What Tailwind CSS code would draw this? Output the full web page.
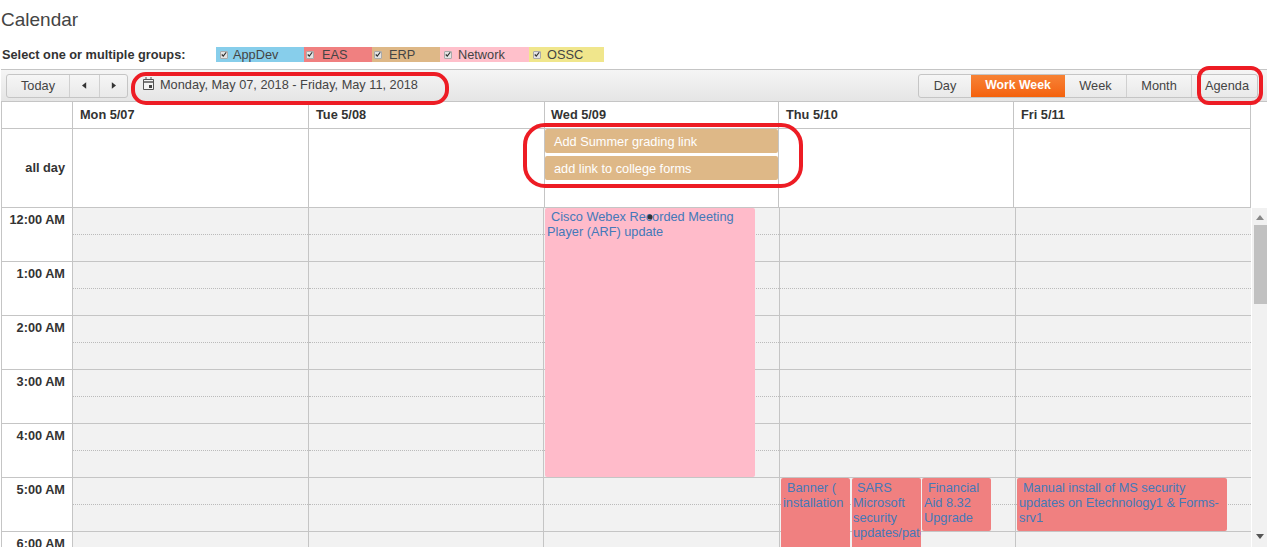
<!DOCTYPE html>
<html>
<head>
<meta charset="utf-8">
<script src="https://cdn.jsdelivr.net/npm/@tailwindcss/browser@4"></script>
</head>
<body class="bg-white">
<div class="relative w-[1267px] h-[547px] overflow-hidden font-['Liberation_Sans',Arial,sans-serif] text-[#333] text-[12.75px]">
  <h1 class="h-[47px] pt-[9px] pl-px text-[19px] leading-[22px] text-[#444]">Calendar</h1>
  <div class="flex h-[15px] items-center pl-[2px]">
    <span class="w-[214px] font-bold text-[#333]">Select one or multiple groups:</span>
    <div class="flex h-[15px] leading-[15px] text-[#444]">
      <label class="flex w-[88px] bg-[#87ceeb] items-center pl-[4px] gap-[5px]"><span class="flex w-[8px] h-[8px] items-center justify-center rounded-[1px] bg-[#e4e4e4] border border-[#aaa]"><svg viewBox="0 0 8 8" class="w-[7px] h-[7px]"><path d="M1 4l2 2 4-5" fill="none" stroke="#333" stroke-width="1.6"/></svg></span>AppDev</label>
      <label class="flex w-[68px] bg-[#f08080] items-center pl-[2px] gap-[8px]"><span class="flex w-[8px] h-[8px] items-center justify-center rounded-[1px] bg-[#e4e4e4] border border-[#aaa]"><svg viewBox="0 0 8 8" class="w-[7px] h-[7px]"><path d="M1 4l2 2 4-5" fill="none" stroke="#333" stroke-width="1.6"/></svg></span>EAS</label>
      <label class="flex w-[68px] bg-[#deb887] items-center pl-[2px] gap-[7px]"><span class="flex w-[8px] h-[8px] items-center justify-center rounded-[1px] bg-[#e4e4e4] border border-[#aaa]"><svg viewBox="0 0 8 8" class="w-[7px] h-[7px]"><path d="M1 4l2 2 4-5" fill="none" stroke="#333" stroke-width="1.6"/></svg></span>ERP</label>
      <label class="flex w-[89px] bg-[#ffc0cb] items-center pl-[4px] gap-[6px]"><span class="flex w-[8px] h-[8px] items-center justify-center rounded-[1px] bg-[#e4e4e4] border border-[#aaa]"><svg viewBox="0 0 8 8" class="w-[7px] h-[7px]"><path d="M1 4l2 2 4-5" fill="none" stroke="#333" stroke-width="1.6"/></svg></span>Network</label>
      <label class="flex w-[75px] bg-[#f0e68c] items-center pl-[4px] gap-[6px]"><span class="flex w-[8px] h-[8px] items-center justify-center rounded-[1px] bg-[#e4e4e4] border border-[#aaa]"><svg viewBox="0 0 8 8" class="w-[7px] h-[7px]"><path d="M1 4l2 2 4-5" fill="none" stroke="#333" stroke-width="1.6"/></svg></span>OSSC</label>
    </div>
  </div>
  <div class="mt-[7px] h-[33px] flex items-center justify-between pl-[5px] pr-[9px] bg-gradient-to-b from-[#f5f5f5] to-[#e5e5e5] border-y border-[#c5c5c5] ml-px text-[#444]">
    <div class="flex items-center">
      <div class="flex h-[24px] w-[122px] rounded-[3px] border border-[#c5c5c5] bg-gradient-to-b from-[#f6f6f6] to-[#e9e9e9]">
        <span class="flex w-[63px] items-center justify-center border-r border-[#d0d0d0]">Today</span>
        <span class="flex w-[30px] items-center justify-center border-r border-[#d0d0d0]"><svg viewBox="0 0 6 8" class="w-[5px] h-[7px]"><path d="M5 0v8L0 4z" fill="#333"/></svg></span>
        <span class="flex flex-1 items-center justify-center"><svg viewBox="0 0 6 8" class="w-[5px] h-[7px]"><path d="M1 0v8l5-4z" fill="#333"/></svg></span>
      </div>
      <div class="flex items-center ml-[15px] -mt-[1px]">
        <svg viewBox="0 0 11 13" class="w-[11px] h-[13px] -mt-[3px]"><path d="M.5 2.5h10v10H.5z" fill="#f4f4f4" stroke="#555"/><path d="M0 5h11" stroke="#555" stroke-width="1.5"/><path d="M3 0v3M8 0v3" stroke="#555"/><path d="M6 8h3v3H6z" fill="#444"/></svg>
        <span class="ml-[6px]">Monday, May 07, 2018 - Friday, May 11, 2018</span>
      </div>
    </div>
    <div class="flex h-[24px] w-[340px] rounded-[3px] border border-[#c5c5c5] bg-gradient-to-b from-[#f6f6f6] to-[#e9e9e9]">
      <span class="flex w-[52px] items-center justify-center">Day</span>
      <span class="flex w-[94px] items-center justify-center font-bold text-[12.25px] text-white bg-gradient-to-b from-[#f78234] to-[#f4610a]">Work Week</span>
      <span class="flex w-[62px] items-center justify-center border-r border-[#d0d0d0]">Week</span>
      <span class="flex w-[65px] items-center justify-center border-r border-[#d0d0d0]">Month</span>
      <span class="flex flex-1 items-center justify-center pl-[5px]">Agenda</span>
    </div>
  </div>
  <div class="flex h-[27px] ml-px border-b border-[#c5c5c5] w-[1250px] font-bold text-[#333] leading-[26px]">
    <div class="w-[71px] border-l border-[#c5c5c5]"></div>
    <div class="w-[236px] border-l border-[#c5c5c5] pl-[7px]">Mon 5/07</div>
    <div class="w-[236px] border-l border-[#c5c5c5] pl-[7px]">Tue 5/08</div>
    <div class="w-[234px] border-l border-[#c5c5c5] pl-[6px]">Wed 5/09</div>
    <div class="w-[235px] border-l border-[#c5c5c5] pl-[7px]">Thu 5/10</div>
    <div class="w-[238px] border-x border-[#c5c5c5] pl-[7px]">Fri 5/11</div>
  </div>
  <div class="flex h-[79px] ml-px border-b border-[#c5c5c5] w-[1250px]">
    <div class="flex w-[71px] items-center justify-end pr-[7px] border-l border-[#c5c5c5] font-bold text-[#333]">all day</div>
    <div class="w-[236px] border-l border-[#c5c5c5]"></div>
    <div class="w-[236px] border-l border-[#c5c5c5]"></div>
    <div class="flex flex-col w-[234px] border-l border-[#c5c5c5] text-white">
      <div class="h-[24px] rounded-[2px] bg-[#deb887] pl-[9px] leading-[26px]">Add Summer grading link</div>
      <div class="mt-[3px] h-[24px] rounded-[2px] bg-[#deb887] pl-[9px] leading-[26px]">add link to college forms</div>
    </div>
    <div class="w-[235px] border-l border-[#c5c5c5]"></div>
    <div class="w-[238px] border-x border-[#c5c5c5]"></div>
  </div>
  <div class="flex h-[339px]">
    <div class="flex flex-col w-[71px] ml-px border-l border-[#c5c5c5] font-bold text-[12.75px] text-[#333] text-right shrink-0">
      <div class="h-[54px] shrink-0 pt-[2px] pr-[7px] border-b border-[#c5c5c5]">12:00 AM</div>
      <div class="h-[54px] shrink-0 pt-[2px] pr-[7px] border-b border-[#c5c5c5]">1:00 AM</div>
      <div class="h-[54px] shrink-0 pt-[2px] pr-[7px] border-b border-[#c5c5c5]">2:00 AM</div>
      <div class="h-[54px] shrink-0 pt-[2px] pr-[7px] border-b border-[#c5c5c5]">3:00 AM</div>
      <div class="h-[54px] shrink-0 pt-[2px] pr-[7px] border-b border-[#c5c5c5]">4:00 AM</div>
      <div class="h-[54px] shrink-0 pt-[2px] pr-[7px] border-b border-[#c5c5c5]">5:00 AM</div>
      <div class="h-[54px] shrink-0 pt-[2px] pr-[7px]">6:00 AM</div>
    </div>
    <div class="grid grid-cols-[236px_235px_236px_236px_236px] w-[1179px] text-[12.75px] leading-[15px] text-[#4479b9] overflow-hidden">
      <div class="relative border-l border-[#c5c5c5] bg-[#f2f2f2]">
        <div class="h-[54px] border-b border-[#c5c5c5]"><div class="h-[27px] border-b border-dotted border-[#bbb]"></div></div>
        <div class="h-[54px] border-b border-[#c5c5c5]"><div class="h-[27px] border-b border-dotted border-[#bbb]"></div></div>
        <div class="h-[54px] border-b border-[#c5c5c5]"><div class="h-[27px] border-b border-dotted border-[#bbb]"></div></div>
        <div class="h-[54px] border-b border-[#c5c5c5]"><div class="h-[27px] border-b border-dotted border-[#bbb]"></div></div>
        <div class="h-[54px] border-b border-[#c5c5c5]"><div class="h-[27px] border-b border-dotted border-[#bbb]"></div></div>
        <div class="h-[54px] border-b border-[#c5c5c5]"><div class="h-[27px] border-b border-dotted border-[#bbb]"></div></div>
        <div class="h-[27px] border-b border-dotted border-[#bbb]"></div>
      </div>
      <div class="relative border-l border-[#c5c5c5] bg-[#f2f2f2]">
        <div class="h-[54px] border-b border-[#c5c5c5]"><div class="h-[27px] border-b border-dotted border-[#bbb]"></div></div>
        <div class="h-[54px] border-b border-[#c5c5c5]"><div class="h-[27px] border-b border-dotted border-[#bbb]"></div></div>
        <div class="h-[54px] border-b border-[#c5c5c5]"><div class="h-[27px] border-b border-dotted border-[#bbb]"></div></div>
        <div class="h-[54px] border-b border-[#c5c5c5]"><div class="h-[27px] border-b border-dotted border-[#bbb]"></div></div>
        <div class="h-[54px] border-b border-[#c5c5c5]"><div class="h-[27px] border-b border-dotted border-[#bbb]"></div></div>
        <div class="h-[54px] border-b border-[#c5c5c5]"><div class="h-[27px] border-b border-dotted border-[#bbb]"></div></div>
        <div class="h-[27px] border-b border-dotted border-[#bbb]"></div>
      </div>
      <div class="relative border-l border-[#c5c5c5] bg-[#f2f2f2]">
        <div class="h-[54px] border-b border-[#c5c5c5]"><div class="h-[27px] border-b border-dotted border-[#bbb]"></div></div>
        <div class="h-[54px] border-b border-[#c5c5c5]"><div class="h-[27px] border-b border-dotted border-[#bbb]"></div></div>
        <div class="h-[54px] border-b border-[#c5c5c5]"><div class="h-[27px] border-b border-dotted border-[#bbb]"></div></div>
        <div class="h-[54px] border-b border-[#c5c5c5]"><div class="h-[27px] border-b border-dotted border-[#bbb]"></div></div>
        <div class="h-[54px] border-b border-[#c5c5c5]"><div class="h-[27px] border-b border-dotted border-[#bbb]"></div></div>
        <div class="h-[54px] border-b border-[#c5c5c5]"><div class="h-[27px] border-b border-dotted border-[#bbb]"></div></div>
        <div class="h-[27px] border-b border-dotted border-[#bbb]"></div>
        <div class="absolute left-[1px] top-0 w-[210px] h-[269px] bg-[#ffbbca] rounded-[2px] pl-[2px] pt-px indent-[4px] overflow-hidden">Cisco Webex Recorded Meeting Player (ARF) update</div>
      </div>
      <div class="relative border-l border-[#c5c5c5] bg-[#f2f2f2]">
        <div class="h-[54px] border-b border-[#c5c5c5]"><div class="h-[27px] border-b border-dotted border-[#bbb]"></div></div>
        <div class="h-[54px] border-b border-[#c5c5c5]"><div class="h-[27px] border-b border-dotted border-[#bbb]"></div></div>
        <div class="h-[54px] border-b border-[#c5c5c5]"><div class="h-[27px] border-b border-dotted border-[#bbb]"></div></div>
        <div class="h-[54px] border-b border-[#c5c5c5]"><div class="h-[27px] border-b border-dotted border-[#bbb]"></div></div>
        <div class="h-[54px] border-b border-[#c5c5c5]"><div class="h-[27px] border-b border-dotted border-[#bbb]"></div></div>
        <div class="h-[54px] border-b border-[#c5c5c5]"><div class="h-[27px] border-b border-dotted border-[#bbb]"></div></div>
        <div class="h-[27px] border-b border-dotted border-[#bbb]"></div>
        <div class="absolute left-[1px] top-[270px] w-[69px] h-[80px] bg-[#f08080] rounded-[2px] pl-[2px] pt-[2px] indent-[4px] overflow-hidden">Banner ( installation</div>
        <div class="absolute left-[72px] top-[270px] w-[69px] h-[80px] bg-[#f08080] rounded-[2px] pl-px pt-[2px] indent-[4px] overflow-hidden">SARS Microsoft security updates/patches</div>
        <div class="absolute left-[142px] top-[270px] w-[69px] h-[53px] bg-[#f08080] rounded-[2px] pl-[2px] pt-[2px] indent-[4px] overflow-hidden">Financial Aid 8.32 Upgrade</div>
      </div>
      <div class="relative border-l border-[#c5c5c5] bg-[#f2f2f2]">
        <div class="h-[54px] border-b border-[#c5c5c5]"><div class="h-[27px] border-b border-dotted border-[#bbb]"></div></div>
        <div class="h-[54px] border-b border-[#c5c5c5]"><div class="h-[27px] border-b border-dotted border-[#bbb]"></div></div>
        <div class="h-[54px] border-b border-[#c5c5c5]"><div class="h-[27px] border-b border-dotted border-[#bbb]"></div></div>
        <div class="h-[54px] border-b border-[#c5c5c5]"><div class="h-[27px] border-b border-dotted border-[#bbb]"></div></div>
        <div class="h-[54px] border-b border-[#c5c5c5]"><div class="h-[27px] border-b border-dotted border-[#bbb]"></div></div>
        <div class="h-[54px] border-b border-[#c5c5c5]"><div class="h-[27px] border-b border-dotted border-[#bbb]"></div></div>
        <div class="h-[27px] border-b border-dotted border-[#bbb]"></div>
        <div class="absolute left-[1px] top-[270px] w-[210px] h-[53px] bg-[#f08080] rounded-[2px] pl-[2px] pt-[2px] indent-[4px] overflow-hidden">Manual install of MS security updates on Etechnology1 &amp; Forms-srv1</div>
      </div>
    </div>
    <div class="flex flex-col items-center w-[15px] ml-px bg-[#f1f1f1]">
      <svg viewBox="0 0 8 5" class="w-[8px] h-[5px] mt-[7px]"><path d="M4 0l4 5H0z" fill="#888"/></svg>
      <div class="mt-[5px] h-[79px] w-[13px] ml-px bg-[#c1c1c1]"></div>
      <svg viewBox="0 0 8 5" class="w-[8px] h-[5px] mt-auto mb-[8px]"><path d="M4 5l4-5H0z" fill="#555"/></svg>
    </div>
  </div>
  <svg class="absolute inset-0 w-[1267px] h-[547px] pointer-events-none" viewBox="0 0 1267 547" fill="none">
    <rect x="133" y="74" width="314" height="29" rx="13" stroke="#ed1c24" stroke-width="4"/>
    <rect x="525" y="125" width="276" height="61" rx="20" stroke="#ed1c24" stroke-width="4"/>
    <rect x="1199" y="68" width="62" height="35" rx="10" stroke="#ed1c24" stroke-width="4"/>
    <circle cx="650" cy="217" r="2.5" fill="#333"/>
  </svg>
</div>
</body>
</html>
